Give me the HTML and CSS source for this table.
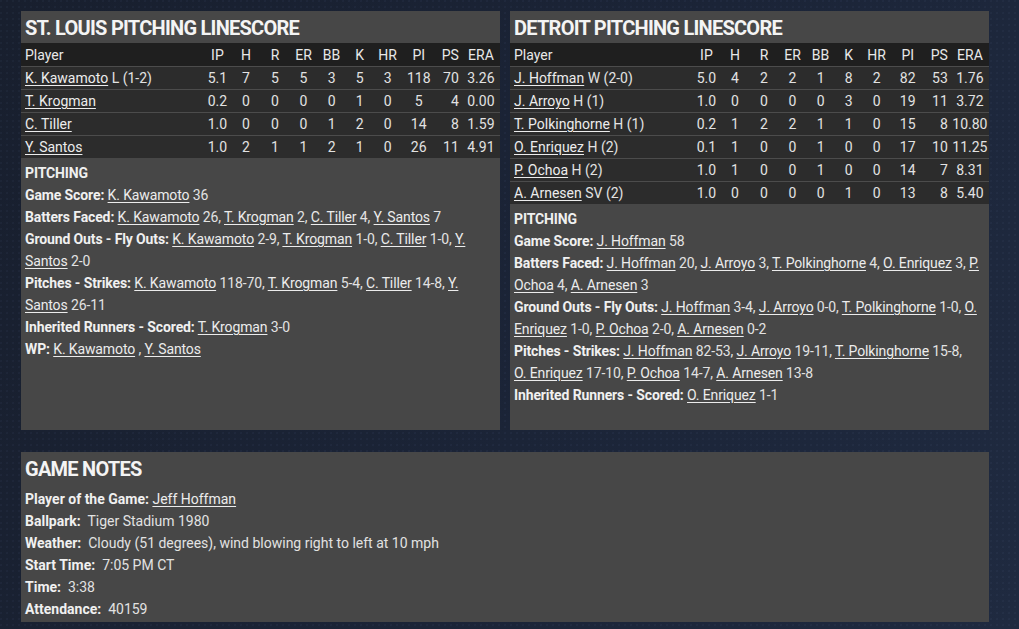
FILE: index.html
```html
<!DOCTYPE html>
<html>
<head>
<meta charset="utf-8">
<link rel="stylesheet" href="styles.css">
</head>
<body>
<div class="page">
  <div class="top">
    <section class="panel">
      <h2 class="title">ST. LOUIS PITCHING LINESCORE</h2>
      <table class="ls">
        <colgroup><col class="c-player"><col class="c28"><col class="c29"><col class="c29"><col class="c28"><col class="c28"><col class="c28"><col class="c28"><col class="c34"><col class="c26"><col class="c38"></colgroup>
        <thead><tr><th class="pl">Player</th><th>IP</th><th>H</th><th>R</th><th>ER</th><th>BB</th><th>K</th><th>HR</th><th>PI</th><th class="ps">PS</th><th>ERA</th></tr></thead>
        <tbody>
          <tr><td class="pl"><a>K. Kawamoto</a> L (1-2)</td><td>5.1</td><td>7</td><td>5</td><td>5</td><td>3</td><td>5</td><td>3</td><td>118</td><td class="ps">70</td><td>3.26</td></tr>
          <tr><td class="pl"><a>T. Krogman</a></td><td>0.2</td><td>0</td><td>0</td><td>0</td><td>0</td><td>1</td><td>0</td><td>5</td><td class="ps">4</td><td>0.00</td></tr>
          <tr><td class="pl"><a>C. Tiller</a></td><td>1.0</td><td>0</td><td>0</td><td>0</td><td>1</td><td>2</td><td>0</td><td>14</td><td class="ps">8</td><td>1.59</td></tr>
          <tr><td class="pl"><a>Y. Santos</a></td><td>1.0</td><td>2</td><td>1</td><td>1</td><td>2</td><td>1</td><td>0</td><td>26</td><td class="ps">11</td><td>4.91</td></tr>
        </tbody>
      </table>
      <div class="notes-body">
        <p><b>PITCHING</b></p>
        <p><b>Game Score:</b> <a>K. Kawamoto</a> 36</p>
        <p><b>Batters Faced:</b> <a>K. Kawamoto</a> 26, <a>T. Krogman</a> 2, <a>C. Tiller</a> 4, <a>Y. Santos</a> 7</p>
        <p><b>Ground Outs - Fly Outs:</b> <a>K. Kawamoto</a> 2-9, <a>T. Krogman</a> 1-0, <a>C. Tiller</a> 1-0, <a>Y.</a><br><a>Santos</a> 2-0</p>
        <p><b>Pitches - Strikes:</b> <a>K. Kawamoto</a> 118-70, <a>T. Krogman</a> 5-4, <a>C. Tiller</a> 14-8, <a>Y.</a><br><a>Santos</a> 26-11</p>
        <p><b>Inherited Runners - Scored:</b> <a>T. Krogman</a> 3-0</p>
        <p><b>WP:</b> <a>K. Kawamoto</a> , <a>Y. Santos</a></p>
      </div>
    </section>
    <section class="panel">
      <h2 class="title">DETROIT PITCHING LINESCORE</h2>
      <table class="ls">
        <colgroup><col class="c-player"><col class="c28"><col class="c29"><col class="c29"><col class="c28"><col class="c28"><col class="c28"><col class="c28"><col class="c34"><col class="c26"><col class="c38"></colgroup>
        <thead><tr><th class="pl">Player</th><th>IP</th><th>H</th><th>R</th><th>ER</th><th>BB</th><th>K</th><th>HR</th><th>PI</th><th class="ps">PS</th><th>ERA</th></tr></thead>
        <tbody>
          <tr><td class="pl"><a>J. Hoffman</a> W (2-0)</td><td>5.0</td><td>4</td><td>2</td><td>2</td><td>1</td><td>8</td><td>2</td><td>82</td><td class="ps">53</td><td>1.76</td></tr>
          <tr><td class="pl"><a>J. Arroyo</a> H (1)</td><td>1.0</td><td>0</td><td>0</td><td>0</td><td>0</td><td>3</td><td>0</td><td>19</td><td class="ps">11</td><td>3.72</td></tr>
          <tr><td class="pl"><a>T. Polkinghorne</a> H (1)</td><td>0.2</td><td>1</td><td>2</td><td>2</td><td>1</td><td>1</td><td>0</td><td>15</td><td class="ps">8</td><td>10.80</td></tr>
          <tr><td class="pl"><a>O. Enriquez</a> H (2)</td><td>0.1</td><td>1</td><td>0</td><td>0</td><td>1</td><td>0</td><td>0</td><td>17</td><td class="ps">10</td><td>11.25</td></tr>
          <tr><td class="pl"><a>P. Ochoa</a> H (2)</td><td>1.0</td><td>1</td><td>0</td><td>0</td><td>1</td><td>0</td><td>0</td><td>14</td><td class="ps">7</td><td>8.31</td></tr>
          <tr><td class="pl"><a>A. Arnesen</a> SV (2)</td><td>1.0</td><td>0</td><td>0</td><td>0</td><td>0</td><td>1</td><td>0</td><td>13</td><td class="ps">8</td><td>5.40</td></tr>
        </tbody>
      </table>
      <div class="notes-body">
        <p><b>PITCHING</b></p>
        <p><b>Game Score:</b> <a>J. Hoffman</a> 58</p>
        <p><b>Batters Faced:</b> <a>J. Hoffman</a> 20, <a>J. Arroyo</a> 3, <a>T. Polkinghorne</a> 4, <a>O. Enriquez</a> 3, <a>P.</a><br><a>Ochoa</a> 4, <a>A. Arnesen</a> 3</p>
        <p><b>Ground Outs - Fly Outs:</b> <a>J. Hoffman</a> 3-4, <a>J. Arroyo</a> 0-0, <a>T. Polkinghorne</a> 1-0, <a>O.</a><br><a>Enriquez</a> 1-0, <a>P. Ochoa</a> 2-0, <a>A. Arnesen</a> 0-2</p>
        <p><b>Pitches - Strikes:</b> <a>J. Hoffman</a> 82-53, <a>J. Arroyo</a> 19-11, <a>T. Polkinghorne</a> 15-8,<br><a>O. Enriquez</a> 17-10, <a>P. Ochoa</a> 14-7, <a>A. Arnesen</a> 13-8</p>
        <p><b>Inherited Runners - Scored:</b> <a>O. Enriquez</a> 1-1</p>
      </div>
    </section>
  </div>
  <section class="panel game-notes">
    <h2 class="title">GAME NOTES</h2>
    <div class="notes-body">
      <p><b>Player of the Game:</b> <a>Jeff Hoffman</a></p>
      <p><b>Ballpark:</b>&nbsp; Tiger Stadium 1980</p>
      <p><b>Weather:</b>&nbsp; Cloudy (51 degrees), wind blowing right to left at 10 mph</p>
      <p><b>Start Time:</b>&nbsp; 7:05 PM CT</p>
      <p><b>Time:</b>&nbsp; 3:38</p>
      <p><b>Attendance:</b>&nbsp; 40159</p>
    </div>
  </section>
</div>
</body>
</html>
```

FILE: styles.css
```css
html, body {
  margin: 0;
  padding: 0;
}
body {
  width: 1019px;
  height: 629px;
  overflow: hidden;
  background-color: #1a2235;
  background-image:
    radial-gradient(circle at 1px 1px, rgba(90, 110, 150, 0.08) 1px, transparent 1.5px),
    linear-gradient(115deg, #181f2e 0%, #1b2437 55%, #1f2a40 100%);
  background-size: 6px 6px, 100% 100%;
  font-family: Roboto, "Noto Sans", sans-serif;
  font-size: 14px;
  color: #e2e2e2;
}
.page {
  padding: 11px 0 0 21px;
}
.top {
  display: grid;
  grid-template-columns: 479px 479px;
  column-gap: 10px;
  height: 419px;
}
.panel {
  background: #474747;
  display: flex;
  flex-direction: column;
}
.title {
  margin: 0;
  height: 32px;
  box-sizing: border-box;
  padding: 2px 0 0 4px;
  line-height: 30px;
  font-size: 20px;
  font-weight: 700;
  color: #f4f4f4;
  letter-spacing: -0.75px;
}
.ls {
  width: 479px;
  border-collapse: collapse;
  table-layout: fixed;
  font-size: 14px;
}
.c-player { width: 182px; }
.c26 { width: 26px; }
.c28 { width: 28px; }
.c29 { width: 29px; }
.c34 { width: 34px; }
.c38 { width: 38px; }
.ls th, .ls td {
  padding: 0;
  height: 22px;
  text-align: center;
  white-space: nowrap;
  font-weight: 400;
}
.ls thead tr {
  background: #1f1f1f;
}
.ls th {
  height: 23px;
  color: #e8e8e8;
}
.ls tbody tr {
  background: #2c2c2c;
  border-top: 1px solid #4c4c4c;
}
.ls .pl {
  text-align: left;
  padding-left: 4px;
}
.ls .ps {
  text-align: right;
  padding-right: 3px;
}
a {
  color: #ececec;
  text-decoration: underline;
  text-underline-offset: 2px;
}
.notes-body {
  padding: 4px 4px 0 4px;
  letter-spacing: -0.12px;
}
.notes-body p {
  margin: 0;
  line-height: 22px;
}
.notes-body b {
  font-weight: 700;
  color: #f0f0f0;
}
.game-notes {
  margin-top: 22px;
  width: 968px;
  height: 170px;
}
.game-notes .notes-body {
  letter-spacing: 0;
}
```
